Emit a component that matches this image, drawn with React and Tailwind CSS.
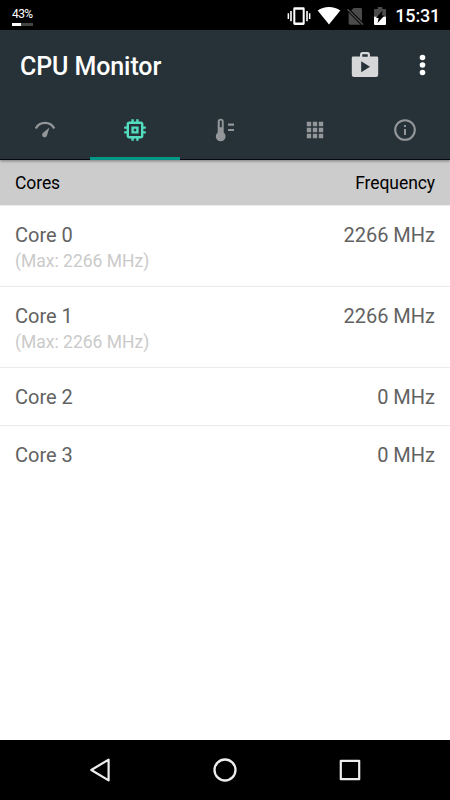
import { useState } from 'react';

const VibrateIcon = () => (
  <svg className="h-[30px] w-6" viewBox="0 0 24 30" fill="white">
    <path fillRule="evenodd" d="M7.7 6.3h8.6a1.4 1.4 0 0 1 1.4 1.4v14.8a1.4 1.4 0 0 1-1.4 1.4H7.7a1.4 1.4 0 0 1-1.4-1.4V7.7a1.4 1.4 0 0 1 1.4-1.4zM8.3 8.7v12.8h7.4V8.7z" />
    <path d="M3.2 10h1.6v10.2H3.2zM.6 12.3h1.5v5.6H.6zM19.2 10h1.6v10.2h-1.6zM21.9 12.3h1.5v5.6h-1.5z" />
  </svg>
);

const WifiIcon = () => (
  <svg className="h-[30px] w-6" viewBox="0 0 24 30" fill="white">
    <path d="M12 23.6L.7 9.6C3.7 7.3 7.7 6 12 6s8.3 1.3 11.3 3.6z" />
  </svg>
);

const NoSimIcon = () => (
  <svg className="h-[30px] w-[18px]" viewBox="0 0 18 30" fill="#4b4b4b">
    <path d="M7.6 7h7a1.4 1.4 0 0 1 1.4 1.4v11.8L5.2 9.4z" />
    <path d="M2.6 11.6l12 12.1H4a1.4 1.4 0 0 1-1.4-1.4z" />
    <path stroke="#4b4b4b" strokeWidth="1.5" d="M1.4 8.2l15.6 15.4" />
  </svg>
);

const BatteryIcon = () => (
  <svg className="h-[30px] w-[14px]" viewBox="0 0 14 30">
    <path fill="#4b4b4b" d="M4.7 6h4.6v2H12a1 1 0 0 1 1 1v7H1V9a1 1 0 0 1 1-1h2.7z" />
    <path fill="white" d="M1 15.7h12V23a1 1 0 0 1-1 1H2a1 1 0 0 1-1-1z" />
    <path fill="black" d="M9.6 9.6l-.8 5h2.6L4.6 22l1-5H3z" />
  </svg>
);

const ShopIcon = () => (
  <svg className="h-[26px] w-7" viewBox="0 0 28 26">
    <path
      fill="#d5d7d8"
      fillRule="evenodd"
      d="M11.5 0h5a2.500 2.500 0 0 1 2.500 2.500V4.500h7a1.200 1.200 0 0 1 1.200 1.200V22.600a2.500 2.500 0 0 1-2.500 2.500H3.300a2.500 2.500 0 0 1-2.500-2.500V5.700A1.200 1.200 0 0 1 2 4.500h7V2.500A2.500 2.500 0 0 1 11.500 0zM11.300 2.300v2.500h5.400V2.300zM10.200 9.200v11l8.800-5.500z"
    />
  </svg>
);

const GaugeIcon = () => (
  <svg className="h-[30px] w-[30px]" viewBox="0 0 30 30">
    <path fill="none" stroke="currentColor" strokeWidth="2.4" d="M5.8 13.5a10.3 10.3 0 0 1 18.4 0" />
    <path fill="currentColor" d="M19.4 12.600l-2.400 8a2.500 2.500 0 1 1-4.200-2.500z" />
  </svg>
);

const ChipIcon = () => (
  <svg className="h-[30px] w-[30px]" viewBox="-.5 -.5 25 25" fill="currentColor">
    <path d="M15 9H9v6h6V9zm-2 4h-2v-2h2v2zm8-2V9h-2V7c0-1.100-.9-2-2-2h-2V3h-2v2h-2V3H9v2H7c-1.100 0-2 .9-2 2v2H3v2h2v2H3v2h2v2c0 1.100.9 2 2 2h2v2h2v-2h2v2h2v-2h2c1.100 0 2-.9 2-2v-2h2v-2h-2v-2h2zm-4 6H7V7h10v10z" />
  </svg>
);

const ThermometerIcon = () => (
  <svg className="h-[30px] w-[30px]" viewBox="0 0 30 30" fill="currentColor">
    <path
      fillRule="evenodd"
      d="M7.700 6.800a3 3 0 0 1 6 0v10.800a4.900 4.900 0 1 1-6 0zM9.800 6.400v5.800h2V6.400a1 1 0 0 0-2 0z"
    />
    <path d="M18 8.500h6v2.200h-6zM18 13.900h6v2.100h-6z" />
  </svg>
);

const AppsIcon = () => (
  <svg className="h-[30px] w-[30px]" viewBox="0 0 30 30" fill="currentColor">
    <path d="M6.800 6.800h4.400v4.400H6.800zM12.800 6.800h4.400v4.400h-4.400zM18.800 6.800h4.400v4.400h-4.400zM6.800 12.800h4.400v4.400H6.800zM12.800 12.800h4.400v4.400h-4.400zM18.800 12.800h4.400v4.400h-4.400zM6.800 18.800h4.400v4.400H6.800zM12.800 18.800h4.400v4.400h-4.400zM18.800 18.800h4.400v4.400h-4.400z" />
  </svg>
);

const InfoIcon = () => (
  <svg className="h-[30px] w-[30px]" viewBox="0 0 30 30">
    <circle cx="15" cy="15" r="9.8" fill="none" stroke="currentColor" strokeWidth="2.1" />
    <path fill="currentColor" d="M14 10h2v2h-2zM14 14h2v6h-2z" />
  </svg>
);

const tabs = [
  { id: 'speed', Icon: GaugeIcon },
  { id: 'cpu', Icon: ChipIcon },
  { id: 'temperature', Icon: ThermometerIcon },
  { id: 'apps', Icon: AppsIcon },
  { id: 'info', Icon: InfoIcon },
];

const cores = [
  { name: 'Core 0', frequency: 2266, max: 2266 },
  { name: 'Core 1', frequency: 2266, max: 2266 },
  { name: 'Core 2', frequency: 0 },
  { name: 'Core 3', frequency: 0 },
];

const StatusBar = ({ battery }) => (
  <div className="flex h-[30px] shrink-0 items-start justify-between bg-black pl-3 pr-[10px] text-white">
    <div className="flex w-[21px] flex-col pt-2">
      <span className="text-[12px] leading-[12px] tracking-[-0.6px]">{battery}%</span>
      <div className="mt-[3px] h-[3px] bg-[#444444]">
        <div className="h-full bg-white" style={{ width: `${battery}%` }} />
      </div>
    </div>
    <div className="flex items-center">
      <VibrateIcon />
      <span className="ml-[6px]"><WifiIcon /></span>
      <span className="ml-[5px]"><NoSimIcon /></span>
      <span className="ml-[9px]"><BatteryIcon /></span>
      <span className="ml-2 pt-px text-[18px] font-medium leading-[30px] tracking-[-0.2px]">15:31</span>
    </div>
  </div>
);

const CoreRow = ({ core }) => (
  <li className="flex justify-between border-b border-[#ebebeb] px-[15px] pb-[14px] pt-4 text-[20px] leading-[27px] text-[#626262] last:border-b-0">
    <div>
      <p>{core.name}</p>
      {core.max && (
        <p className="pt-px text-[17.5px] leading-[22px] text-[#cacaca]">(Max: {core.max} MHz)</p>
      )}
    </div>
    <p>{core.frequency} MHz</p>
  </li>
);

const App = () => {
  const [activeTab, setActiveTab] = useState('cpu');

  return (
    <div className="flex h-[800px] w-[450px] flex-col overflow-hidden bg-white font-[Roboto,sans-serif]">
      <StatusBar battery={43} />

      <header className="z-10 shrink-0 bg-[#263238] shadow-[0_1px_3px_rgba(0,0,0,0.4)]">
        <div className="flex h-[70px] items-center justify-between pl-5 pr-6">
          <h1 className="pt-[3px] text-[25px] font-medium tracking-[-0.1px] text-white">CPU Monitor</h1>
          <div className="flex items-center">
            <button className="mr-[40px]"><ShopIcon /></button>
            <button>
              <svg className="h-6 w-[7px]" viewBox="0 0 7 24" fill="white">
                <circle cx="3.5" cy="4.5" r="2.8" />
                <circle cx="3.5" cy="12" r="2.8" />
                <circle cx="3.5" cy="19.5" r="2.8" />
              </svg>
            </button>
          </div>
        </div>

        <nav className="grid h-[60px] grid-cols-5">
          {tabs.map(({ id, Icon }) => (
            <button
              key={id}
              onClick={() => setActiveTab(id)}
              className={`flex flex-col items-center pt-[15px] ${activeTab === id ? 'text-[#53dcc0]' : 'text-[#939799]'}`}
            >
              <Icon />
              <span className={`mt-auto w-full ${activeTab === id ? 'h-[3px] bg-[#009688]' : 'h-px bg-[#06090f]'}`} />
            </button>
          ))}
        </nav>
      </header>

      <main className="flex-1">
        <div className="flex h-[46px] items-center justify-between border-b border-[#eeeeee] bg-[#cccccc] px-[15px] pt-px text-[17.5px] tracking-[-0.08px] text-black">
          <span>Cores</span>
          <span>Frequency</span>
        </div>
        <ul>
          {cores.map(core => (
            <CoreRow key={core.name} core={core} />
          ))}
        </ul>
      </main>

      <footer className="flex h-[60px] shrink-0 items-center justify-between bg-black px-[87px]">
        <svg className="h-[26px] w-[26px]" viewBox="0 0 26 26" fill="none" stroke="#eeeeee" strokeWidth="2.2" strokeLinejoin="round">
          <path d="M21.6 2.6v20.8L4.3 13z" />
        </svg>
        <svg className="h-[26px] w-[26px]" viewBox="0 0 26 26" fill="none" stroke="#eeeeee" strokeWidth="2.3">
          <circle cx="13" cy="13" r="10.5" />
        </svg>
        <svg className="h-[26px] w-[26px]" viewBox="0 0 26 26" fill="none" stroke="#eeeeee" strokeWidth="2.2" strokeLinejoin="round">
          <path d="M3.8 3.8h18.4v18.4H3.8z" />
        </svg>
      </footer>
    </div>
  );
};

export default App;
